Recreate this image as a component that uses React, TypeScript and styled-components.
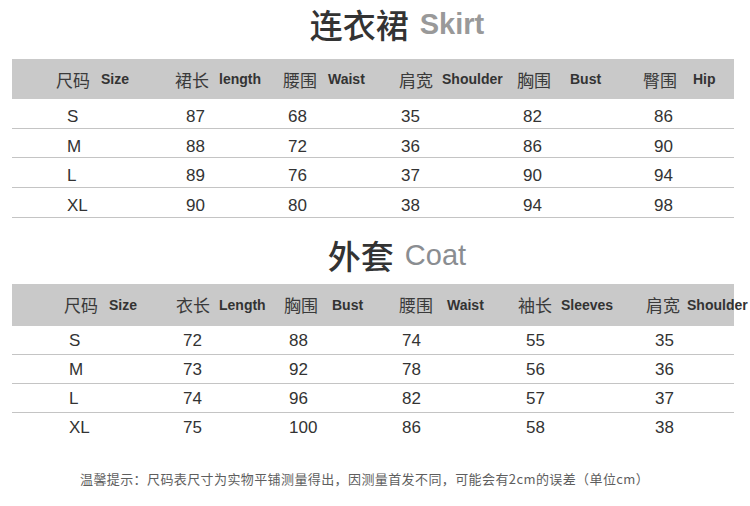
import React from "react";
import styled, { createGlobalStyle } from "styled-components";

const GlobalStyle = createGlobalStyle`
  html, body {
    margin: 0;
    padding: 0;
    background: #ffffff;
  }
  body {
    font-family: "Liberation Sans", Arial, "Noto Sans CJK SC", sans-serif;
    color: #333;
  }
`;

type Col = { cn: string; en: string; hx: number; gap: number; dx: number };

const skirtCols: Col[] = [
  { cn: "尺码", en: "Size", hx: 44, gap: 11, dx: 55 },
  { cn: "裙长", en: "length", hx: 15, gap: 10, dx: 26 },
  { cn: "腰围", en: "Waist", hx: 13, gap: 11, dx: 18 },
  { cn: "肩宽", en: "Shoulder", hx: 14, gap: 9, dx: 16 },
  { cn: "胸围", en: "Bust", hx: 12, gap: 19, dx: 18 },
  { cn: "臀围", en: "Hip", hx: 13, gap: 16, dx: 24 },
];

const coatCols: Col[] = [
  { cn: "尺码", en: "Size", hx: 52, gap: 11, dx: 57 },
  { cn: "衣长", en: "Length", hx: 16, gap: 9, dx: 23 },
  { cn: "胸围", en: "Bust", hx: 14, gap: 14, dx: 19 },
  { cn: "腰围", en: "Waist", hx: 14, gap: 14, dx: 17 },
  { cn: "袖长", en: "Sleeves", hx: 13, gap: 9, dx: 21 },
  { cn: "肩宽", en: "Shoulder", hx: 16, gap: 7, dx: 25 },
];

const skirtRows = [
  ["S", "87", "68", "35", "82", "86"],
  ["M", "88", "72", "36", "86", "90"],
  ["L", "89", "76", "37", "90", "94"],
  ["XL", "90", "80", "38", "94", "98"],
];

const coatRows = [
  ["S", "72", "88", "74", "55", "35"],
  ["M", "73", "92", "78", "56", "36"],
  ["L", "74", "96", "82", "57", "37"],
  ["XL", "75", "100", "86", "58", "38"],
];

const Page = styled.div`
  width: 750px;
  height: 506px;
  overflow: hidden;
  display: flex;
  flex-direction: column;
`;

const Title = styled.div<{ $h: number; $pt: number; $pb: number }>`
  height: ${(p) => p.$h}px;
  padding-top: ${(p) => p.$pt}px;
  padding-bottom: ${(p) => p.$pb}px;
  box-sizing: border-box;
  display: flex;
  align-items: center;
  justify-content: center;
  padding-left: 44px;
`;

const TitleCn = styled.span`
  font-family: "Noto Sans CJK SC", sans-serif;
  font-size: 33px;
  font-weight: 500;
  color: #333;
  line-height: 1;
`;

const TitleEn = styled.span<{ $bold?: boolean; $color: string }>`
  font-family: "Liberation Sans", Arial, sans-serif;
  font-size: 29px;
  font-weight: ${(p) => (p.$bold ? 700 : 400)};
  color: ${(p) => p.$color};
  margin-left: 11px;
  line-height: 1;
`;

const Table = styled.div`
  margin-left: 12px;
  width: 722px;
`;

const Grid = styled.div`
  display: grid;
  grid-template-columns: 148px 110px 115px 120px 125px 104px;
  align-items: center;
`;

const HeadRow = styled(Grid)<{ $h: number }>`
  height: ${(p) => p.$h}px;
  background: #c9c9c9;
`;

const HeadCell = styled.div<{ $pad: number; $gap: number }>`
  display: flex;
  align-items: center;
  gap: ${(p) => p.$gap}px;
  padding-left: ${(p) => p.$pad}px;
  white-space: nowrap;
`;

const HeadCn = styled.span`
  font-family: "Noto Sans CJK SC", sans-serif;
  font-size: 17px;
  color: #3a3a3a;
`;

const HeadEn = styled.span`
  font-family: "Liberation Sans", Arial, sans-serif;
  font-size: 14px;
  font-weight: 700;
  color: #333;
`;

const Row = styled(Grid)<{ $h: number; $line: boolean; $drop: number }>`
  height: ${(p) => p.$h}px;
  box-sizing: border-box;
  padding-top: ${(p) => p.$drop}px;
  border-bottom: 1px solid ${(p) => (p.$line ? "#c4c4c4" : "transparent")};
`;

const Cell = styled.div<{ $pad: number }>`
  padding-left: ${(p) => p.$pad}px;
  font-family: "Liberation Sans", Arial, sans-serif;
  font-size: 17px;
  color: #333;
`;

const Note = styled.div`
  margin-top: 27px;
  padding-left: 80px;
  font-family: "Noto Sans CJK SC", sans-serif;
  font-size: 13px;
  letter-spacing: 0.4px;
  color: #5e5e5e;
  white-space: nowrap;
`;

type SizeTableProps = {
  cols: Col[];
  rows: string[][];
  headH: number;
  rowH: number;
  drop: number;
  lastLine: boolean;
};

const SizeTable = ({ cols, rows, headH, rowH, drop, lastLine }: SizeTableProps) => (
  <Table>
    <HeadRow $h={headH}>
      {cols.map((c) => (
        <HeadCell key={c.cn} $pad={c.hx} $gap={c.gap}>
          <HeadCn>{c.cn}</HeadCn>
          <HeadEn>{c.en}</HeadEn>
        </HeadCell>
      ))}
    </HeadRow>
    {rows.map((r, i) => (
      <Row key={r[0]} $h={rowH} $drop={drop} $line={lastLine || i < rows.length - 1}>
        {r.map((v, j) => (
          <Cell key={j} $pad={cols[j].dx}>
            {v}
          </Cell>
        ))}
      </Row>
    ))}
  </Table>
);

export default function App() {
  return (
    <Page>
      <GlobalStyle />
      <Title $h={59} $pt={0} $pb={10}>
        <TitleCn>连衣裙</TitleCn>
        <TitleEn $bold $color="#999">Skirt</TitleEn>
      </Title>
      <SizeTable cols={skirtCols} rows={skirtRows} headH={40} rowH={29.7} drop={7} lastLine />
      <Title $h={66} $pt={9} $pb={0}>
        <TitleCn>外套</TitleCn>
        <TitleEn $color="#8a8d91">Coat</TitleEn>
      </Title>
      <SizeTable cols={coatCols} rows={coatRows} headH={42} rowH={29} drop={2} lastLine={false} />
      <Note>温馨提示：尺码表尺寸为实物平铺测量得出，因测量首发不同，可能会有2cm的误差（单位cm）</Note>
    </Page>
  );
}
